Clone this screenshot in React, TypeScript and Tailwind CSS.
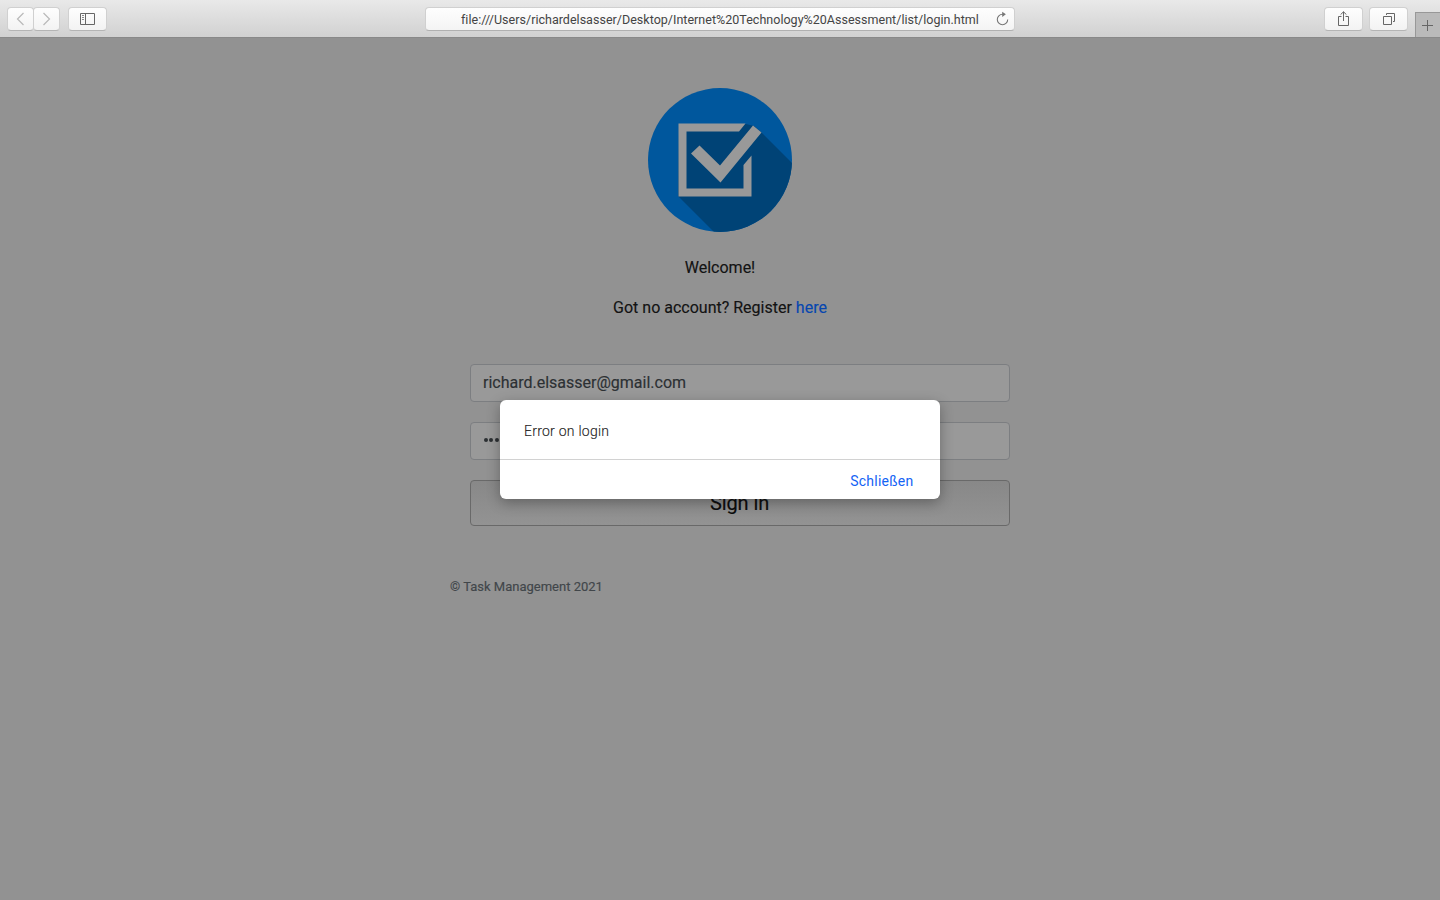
import React from "react";

const chromeButton =
  "flex h-[24px] items-center justify-center rounded-[4px] border border-[#d0d0d0] border-b-[#b4b4b4] bg-linear-to-b from-[#fefefe] to-[#f3f3f3]";

const heavyText = "[-webkit-text-stroke:0.15px_currentColor]";

function Toolbar() {
  return (
    <header className="flex h-[38px] shrink-0 items-start border-b border-[#898989] bg-linear-to-b from-[#e9e9e9] to-[#d1d1d1]">
      <div className="flex w-[425px] pt-[7px] pl-[7px]">
        <button className={`${chromeButton} w-[27px]`} aria-label="Back">
          <svg width="25" height="22" viewBox="0 0 25 22" fill="none" stroke="#b9b9b9" strokeWidth="1.2">
            <path d="M15.5 5L9.5 11L15.5 17" />
          </svg>
        </button>
        <button className={`${chromeButton} -ml-px w-[27px]`} aria-label="Forward">
          <svg width="25" height="22" viewBox="0 0 25 22" fill="none" stroke="#b9b9b9" strokeWidth="1.2">
            <path d="M9.5 5L15.5 11L9.5 17" />
          </svg>
        </button>
        <button className={`${chromeButton} ml-[8px] w-[39px]`} aria-label="Sidebar">
          <svg width="15" height="12" viewBox="0 0 15 12" fill="none" stroke="#666">
            <path d="M.5 .5H14.5V11.5H.5ZM5.5 .5V11.5" />
            <path d="M2 2.5H4M2 4.5H4M2 6.5H4" stroke="#888" />
          </svg>
        </button>
      </div>
      <div className="mt-[7px] flex h-[24px] w-[590px] items-center rounded-[4px] border border-[#d0d0d0] border-b-[#b0b0b0] bg-linear-to-b from-[#fefefe] to-[#f4f4f4]">
        <span className="ml-[35px] w-[519px] whitespace-nowrap pt-[2px] text-[12.5px] leading-[22px] tracking-[0.02px] text-[#444]">
          file:///Users/richardelsasser/Desktop/Internet%20Technology%20Assessment/list/login.html
        </span>
        <svg className="ml-[15px]" width="14" height="16" viewBox="0 0 14 16" fill="none" stroke="#777" strokeWidth="1.1">
          <path d="M8 3.3H7.5A5.2 5.2 0 1 0 12.7 8.5" />
          <path d="M7.2 .7L10.9 3.3L7.2 5.9Z" fill="#777" stroke="none" />
        </svg>
      </div>
      <div className="ml-auto flex">
        <button className={`${chromeButton} mt-[7px] w-[39px]`} aria-label="Share">
          <svg width="13" height="16" viewBox="0 0 13 16" fill="none" stroke="#666">
            <path d="M4.5 5.5H1.5V14.5H11.5V5.5H8.5M6.5 10V.8M3.6 3.6L6.5 .8L9.4 3.6" />
          </svg>
        </button>
        <button className={`${chromeButton} mt-[7px] ml-[6px] w-[39px]`} aria-label="Tabs">
          <svg width="13" height="12" viewBox="0 0 13 12" fill="none" stroke="#666">
            <path d="M1.5 3.5H9.5V11.5H1.5ZM4.5 2V.5H12.5V8.5H11" />
          </svg>
        </button>
        <button
          className="mt-[12px] ml-[7px] flex h-[25px] w-[25px] items-start justify-start border-t border-l border-[#989898] bg-[#bababa] pt-[7px] pl-[6px]"
          aria-label="New tab"
        >
          <svg width="11" height="11" viewBox="0 0 11 11" stroke="#666">
            <path d="M5.5 0V11M0 5.5H11" />
          </svg>
        </button>
      </div>
    </header>
  );
}

function Logo() {
  return (
    <svg className="mx-auto block" width="144" height="144" viewBox="0 0 144 144">
      <defs>
        <clipPath id="disc">
          <circle cx="72" cy="72" r="72" />
        </clipPath>
      </defs>
      <circle cx="72" cy="72" r="72" fill="#00579d" />
      <path clipPath="url(#disc)" d="M31 36H98L106 38L113 44L144 75L159 90V160H82L30 108Z" fill="#004376" />
      <path d="M30.5 35.5H97.5L91 43.5H38.5V100.5H95.5V77L103.5 67.5V108.5H30.5Z" fill="#999" />
      <path d="M105 37.5L113.5 44.5L72.5 94.5L43 65.5L51.5 57.5L72 77.5Z" fill="#999" />
    </svg>
  );
}

function LoginForm() {
  return (
    <form className="ml-[20px] mt-[44px] flex w-[540px] flex-col gap-[20px]">
      <div className={`h-[38px] rounded-[4px] border border-[#7c7e81] bg-[#999] px-[12px] text-[16px] leading-[36px] text-[#2c3033] ${heavyText}`}>
        richard.elsasser@gmail.com
      </div>
      <div className="flex h-[38px] items-center gap-[1.4px] rounded-[4px] border border-[#7c7e81] bg-[#999] px-[13px] pb-[2px]">
        {[0, 1, 2, 3, 4, 5, 6, 7].map((dot) => (
          <span key={dot} className="h-[4px] w-[4px] rounded-full bg-[#2c3033]" />
        ))}
      </div>
      <button
        type="button"
        className={`h-[46px] rounded-[4px] border border-[#696969] bg-linear-to-b from-[#888] to-[#939393] pr-px text-[20px] leading-[44px] tracking-[-0.1px] text-[#0c0c0c] ${heavyText}`}
      >
        Sign in
      </button>
    </form>
  );
}

function ErrorDialog() {
  return (
    <div
      role="dialog"
      className="absolute top-[400px] left-[500px] h-[99px] w-[440px] rounded-[6px] bg-white shadow-[0_4px_14px_rgba(0,0,0,0.3)]"
    >
      <p className="h-[60px] border-b border-[#d2d2d2] px-[24px] pt-[21px] text-[14px] leading-[20px] font-light tracking-[0.25px] text-[#222] [-webkit-text-stroke:0.12px_currentColor]">
        Error on login
      </p>
      <div className="flex justify-end pt-[11px] pr-[26.5px]">
        <button className="text-[14px] leading-[20px] tracking-[0.25px] text-[#1463f5]">Schließen</button>
      </div>
    </div>
  );
}

export default function App() {
  return (
    <div className="relative flex h-[900px] w-[1440px] flex-col overflow-hidden bg-[#929292] font-['Roboto',sans-serif]">
      <Toolbar />
      <main className="pt-[50px]">
        <Logo />
        <p className={`mt-[24px] text-center text-[16px] leading-[24px] text-[#131313] ${heavyText}`}>Welcome!</p>
        <p className={`mt-[16px] text-center text-[16px] leading-[24px] text-[#131313] ${heavyText}`}>
          Got no account? Register <a className="text-[#0646b0]">here</a>
        </p>
        <div className="mx-auto w-[540px]">
          <LoginForm />
          <p className={`mt-[51px] text-[13px] leading-[20px] text-[#41464a] ${heavyText}`}>© Task Management 2021</p>
        </div>
      </main>
      <ErrorDialog />
    </div>
  );
}
